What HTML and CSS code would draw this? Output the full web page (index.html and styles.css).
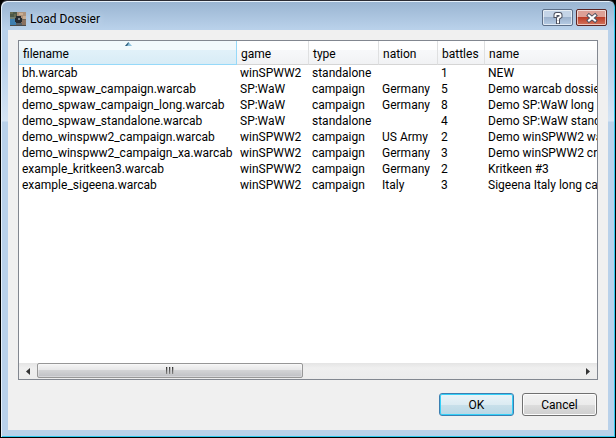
FILE: index.html
```html
<!DOCTYPE html>
<html lang="en">
<head>
<meta charset="utf-8">
<title>Load Dossier</title>
<link rel="stylesheet" href="styles.css">
</head>
<body>
<main class="window" role="dialog" aria-labelledby="title">
  <header class="titlebar">
    <svg class="app-icon" viewBox="0 0 16 14" shape-rendering="crispEdges" aria-hidden="true">
      <rect width="16" height="14" fill="#6d6558"/>
      <path d="M0 0h7v5H0z" fill="#4c5848"/>
      <path d="M0 0h3v2H0zM4 2h2v3H4z" fill="#666a50"/>
      <path d="M7 0h9v7H7z" fill="#ac927b"/>
      <path d="M9 1h4v2H9zM13 4h3v3h-3z" fill="#c9ad92"/>
      <path d="M0 7h6v6H0z" fill="#3c7eb0"/>
      <path d="M0 5h5v2H0z" fill="#6f8075"/>
      <path d="M11 8h5v5h-5z" fill="#8a7160"/>
      <path d="M6 4h5v7H6zM5 6h7v4H5z" fill="#252b32"/>
      <path d="M8 6h2v2H8z" fill="#7f8990"/>
      <path d="M6 11h6v2H6z" fill="#566169"/>
      <path d="M0 13h16v1H0z" fill="#494a4a"/>
    </svg>
    <h1 class="title" id="title">Load Dossier</h1>
    <button class="caption help" type="button" aria-label="Help">
      <svg viewBox="0 0 12 12" aria-hidden="true">
        <path class="outline" d="M3.5 4V3q0-1 1-1h3q1 0 1 1v1.500L6 6.300v1.200M6 9.800v.4"/>
        <path class="glyph" d="M3.5 4V3q0-1 1-1h3q1 0 1 1v1.500L6 6.300v1.200M6 9.800v.4"/>
      </svg>
    </button>
    <button class="caption close" type="button" aria-label="Close">
      <svg viewBox="0 0 12 12" aria-hidden="true">
        <path class="outline" d="M3 3.500l6 5M9 3.500l-6 5"/>
        <path class="glyph" d="M3 3.500l6 5M9 3.500l-6 5"/>
      </svg>
    </button>
  </header>
  <form class="content">
    <div class="list">
      <div class="viewport">
        <table>
          <colgroup><col class="c-file"><col class="c-game"><col class="c-type"><col class="c-nation"><col class="c-battles"><col class="c-name"></colgroup>
          <thead>
            <tr>
              <th class="sorted" aria-sort="ascending">filename<svg class="sort" viewBox="0 0 7 4" aria-hidden="true"><path d="M0 4l3.500-4L7 4z" fill="#8fc3df"/><path d="M0 4l3.500-4v2L2 4z" fill="#335f7b"/></svg></th>
              <th>game</th><th>type</th><th>nation</th><th>battles</th><th>name</th>
            </tr>
          </thead>
          <tbody>
            <tr><td>bh.warcab</td><td>winSPWW2</td><td>standalone</td><td></td><td>1</td><td>NEW</td></tr>
            <tr><td>demo_spwaw_campaign.warcab</td><td>SP:WaW</td><td>campaign</td><td>Germany</td><td>5</td><td>Demo warcab dossie</td></tr>
            <tr><td>demo_spwaw_campaign_long.warcab</td><td>SP:WaW</td><td>campaign</td><td>Germany</td><td>8</td><td>Demo SP:WaW long c</td></tr>
            <tr><td>demo_spwaw_standalone.warcab</td><td>SP:WaW</td><td>standalone</td><td></td><td>4</td><td>Demo SP:WaW stand</td></tr>
            <tr><td>demo_winspww2_campaign.warcab</td><td>winSPWW2</td><td>campaign</td><td>US Army</td><td>2</td><td>Demo winSPWW2 wa</td></tr>
            <tr><td>demo_winspww2_campaign_xa.warcab</td><td>winSPWW2</td><td>campaign</td><td>Germany</td><td>3</td><td>Demo winSPWW2 cr</td></tr>
            <tr><td>example_kritkeen3.warcab</td><td>winSPWW2</td><td>campaign</td><td>Germany</td><td>2</td><td>Kritkeen #3</td></tr>
            <tr><td>example_sigeena.warcab</td><td>winSPWW2</td><td>campaign</td><td>Italy</td><td>3</td><td>Sigeena Italy long ca</td></tr>
          </tbody>
        </table>
      </div>
      <div class="scrollbar">
        <button class="arrow" type="button" aria-label="Scroll left"><svg viewBox="0 0 4 7" aria-hidden="true"><path d="M4 0v7L0 3.500z"/></svg></button>
        <div class="track">
          <div class="thumb"><i></i><i></i><i></i></div>
        </div>
        <button class="arrow" type="button" aria-label="Scroll right"><svg viewBox="0 0 4 7" aria-hidden="true"><path d="M0 0v7l4-3.500z"/></svg></button>
      </div>
    </div>
    <footer class="actions">
      <button class="push default" type="submit">OK</button>
      <button class="push" type="button">Cancel</button>
    </footer>
  </form>
</main>
</body>
</html>
```
FILE: styles.css
```css
* { box-sizing: border-box; }

body {
  margin: 0;
  background: #000;
  color: #000;
  font: 12px/16px Roboto, "Open Sans", sans-serif;
}

button { padding: 0; font: inherit; color: inherit; }
svg { display: block; }

.window {
  display: flex;
  flex-direction: column;
  height: 100vh;
  padding: 0 7px 7px;
  border: 1px solid #000;
  border-top-color: #2b2b33;
  border-radius: 7px 7px 0 0;
  background: linear-gradient(#99b4d1, #b9d1ea 28px, #b9d1ea 60px, #d5e4f4 120px, #b9d1ea 121px);
  box-shadow: inset 1px 1px #e6f0fa, inset -1px -1px #2fc8ee;
}

.titlebar {
  display: flex;
  align-items: center;
  gap: 3px;
  height: 29px;
  padding: 6px 1px 0 2px;
}

.app-icon { width: 16px; height: 14px; }

.title {
  flex: 1;
  margin: 0 0 0 1px;
  font-size: 12px;
  font-weight: 400;
  text-shadow: 0 0 6px #dce9f6;
}

.caption {
  display: flex;
  align-items: center;
  justify-content: center;
  width: 31px;
  height: 17px;
  margin-bottom: 2px;
  border: 1px solid #5d6f88;
  border-radius: 2px;
  box-shadow: inset 0 0 0 1px #ffffff99;
}

.caption svg { width: 12px; height: 12px; }
.caption path { fill: none; stroke-linecap: square; }
.help { background: linear-gradient(#c4d4e7 50%, #9cb2cd 50%, #b6cce5); }
.close {
  border-color: #5c2523;
  background: linear-gradient(#dda096 50%, #bd3e29 50%, #d2745d);
}
.outline { stroke: #4d5261; stroke-width: 4; }
.glyph { stroke: #fff; stroke-width: 2; }

.content {
  flex: 1;
  display: flex;
  flex-direction: column;
  gap: 13px;
  min-height: 0;
  padding: 10px 10px 14px;
  background: #f0f0f0;
}

.list {
  flex: 1;
  display: flex;
  flex-direction: column;
  min-height: 0;
  border: 1px solid #828790;
  background: #fff;
}

.viewport { flex: 1; min-height: 0; overflow: hidden; }

table {
  width: 765px;
  table-layout: fixed;
  border-collapse: separate;
  border-spacing: 0;
}

.c-file { width: 218px; }
.c-game { width: 72px; }
.c-type { width: 70px; }
.c-nation { width: 59px; }
.c-battles { width: 47px; }

th {
  position: relative;
  height: 24px;
  padding: 2px 4px 0;
  border-right: 1px solid #dfe0e1;
  border-bottom: 1px solid #d5d5d5;
  background: linear-gradient(#fff 40%, #f7f8fa 40%, #f1f2f4);
  font-weight: 400;
  text-align: left;
}

th.sorted {
  border-color: #96d9f9;
  background: linear-gradient(#f2f9fc 40%, #e1f1f9 40%, #d8ecf6);
}

.sort {
  position: absolute;
  top: 1px;
  left: calc(50% - 3px);
  width: 7px;
  height: 4px;
}

td { height: 16px; padding: 0 3px; white-space: nowrap; }

.scrollbar {
  display: flex;
  height: 16px;
  background: linear-gradient(#e4e4e4, #efefef 5px, #ececec);
}

.arrow {
  display: flex;
  align-items: center;
  justify-content: center;
  width: 18px;
  border: 0;
  background: none;
}

.arrow svg { width: 4px; height: 7px; fill: #333; }
.track { flex: 1; }

.thumb {
  display: flex;
  align-items: center;
  justify-content: center;
  gap: 1px;
  width: 49%;
  height: 15px;
  border: 1px solid #979797;
  border-radius: 2px;
  background: linear-gradient(#f5f5f5, #e6e6e7 50%, #d2d3d5 50%, #bfc0c4);
  box-shadow: inset 0 0 0 1px #ffffff55;
}

.thumb i {
  width: 2px;
  height: 7px;
  border-right: 1px solid #bbb;
  background: linear-gradient(#333, #888);
}

.actions { display: flex; justify-content: flex-end; gap: 8px; padding-right: 1px; }

.push {
  width: 75px;
  height: 23px;
  border: 1px solid #707070;
  border-radius: 3px;
  background: linear-gradient(#f2f2f2, #ebebeb 50%, #dddddd 50%, #cfcfcf);
  box-shadow: inset 0 0 0 1px #fcfcfc;
}

.default {
  border-color: #3c7fb1;
  background: linear-gradient(#eaf4f8, #dcebf2 50%, #c9e0ea 50%, #b9d7e5);
  box-shadow: inset 0 0 0 1px #35d0f8;
}
```
